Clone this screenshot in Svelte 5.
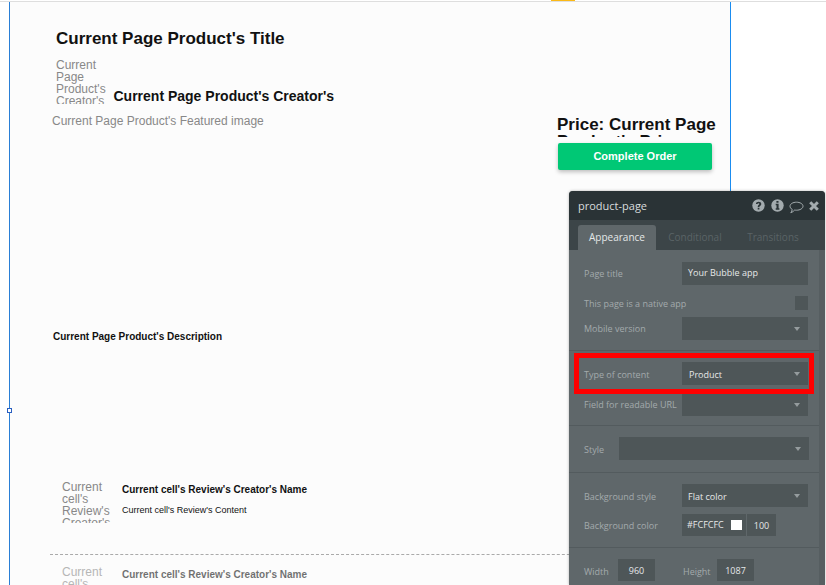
<script>
  const reviews = [
    { cls: 'review', content: true },
    { cls: 'review faded', content: false }
  ];
</script>

<div class="screen">
  <div class="topline"><span class="marker"></span></div>
  <main class="page">
    <span class="handle"></span>
    <h1>Current Page Product's Title</h1>
    <div class="creator">
      <div class="avatar">Current Page Product's Creator's</div>
      <div class="creator-name">Current Page Product's Creator's</div>
    </div>
    <div class="image-row">
      <div class="image-label">Current Page Product's Featured image</div>
      <div class="order">
        <div class="price">Price: Current Page Product's Price</div>
        <button class="complete">Complete Order</button>
      </div>
    </div>
    <div class="description">Current Page Product's Description</div>
    <div class="reviews">
      {#each reviews as r}
        <div class={r.cls}>
          <div class="r-avatar">Current cell's Review's Creator's</div>
          <div class="r-text">
            <div class="r-name">Current cell's Review's Creator's Name</div>
            {#if r.content}<div class="r-content">Current cell's Review's Content</div>{/if}
          </div>
        </div>
      {/each}
    </div>
  </main>

  <aside class="panel">
    <header class="head">
      <span class="title">product-page</span>
      <span class="icons">
        <svg width="13" height="13" viewBox="0 0 13 13"><circle cx="6.5" cy="6.5" r="6.2" fill="#a3abae"/><path d="M3.900 5c.1-1.500 1.200-2.200 2.700-2.200s2.700.8 2.700 2.100c0 1.700-1.900 1.700-1.900 3H5.700c0-2 1.600-2 1.600-2.900 0-.4-.3-.7-.8-.7-.6 0-.9.300-1 .8zM5.700 8.800h1.700v1.600H5.700z" fill="#2a3336"/></svg>
        <svg width="13" height="13" viewBox="0 0 13 13"><circle cx="6.5" cy="6.5" r="6.2" fill="#a3abae"/><path d="M5.400 2h2.100v1.800H5.400zM4.700 4.800h2.900v4.400h.8v1.500H4.700V9.200h.8V6.300h-.8z" fill="#2a3336"/></svg>
        <svg class="bubble" width="15" height="13" viewBox="0 0 15 13"><path d="M7.500 1.200c3.500 0 6.500 1.700 6.500 4s-3 4-6.500 4c-.6 0-1.200 0-1.800-.2-1 1-2.300 2.300-3.900 2.700.8-.9 1.300-2.100 1.400-3.300C1.900 7.700 1 6.500 1 5.200c0-2.300 3-4 6.500-4z" fill="none" stroke="#a3abae"/></svg>
        <svg width="10" height="10" viewBox="0 0 10 10"><path d="M1.200 1.200l7.600 7.600M8.800 1.200l-7.600 7.600" stroke="#a3abae" stroke-width="3"/></svg>
      </span>
    </header>
    <nav class="tabs">
      <span class="tab active">Appearance</span>
      <span class="tab">Conditional</span>
      <span class="tab">Transitions</span>
    </nav>
    <div class="body">
      <section class="sec first">
        <div class="row title-row"><label>Page title</label><div class="field text plain">Your Bubble app</div></div>
        <div class="row native-row"><label>This page is a native app</label><span class="check"></span></div>
        <div class="row mobile-row"><label>Mobile version</label><div class="field select"><i></i></div></div>
      </section>
      <section class="sec second">
        <div class="row type-row low"><label>Type of content</label><div class="field select text product">Product<i></i></div></div>
        <div class="row url-row"><label>Field for readable URL</label><div class="field select"><i></i></div></div>
      </section>
      <section class="sec third">
        <div class="row style-row low"><label>Style</label><div class="field select wide"><i></i></div></div>
      </section>
      <section class="sec fourth">
        <div class="row bg-row slight"><label>Background style</label><div class="field select text">Flat color<i></i></div></div>
        <div class="row color-row slight">
          <label>Background color</label>
          <div class="color-field">#FCFCFC<b></b></div>
          <div class="opacity">100</div>
        </div>
      </section>
      <section class="sec size low">
        <label class="w-label">Width</label><div class="num w-num">960</div>
        <label class="h-label">Height</label><div class="num">1087</div>
      </section>
    </div>
    <div class="redbox"></div>
  </aside>
</div>

<style>
  :global(body) { margin: 0; background: #fff; }
  .screen {
    position: relative;
    width: 826px;
    height: 585px;
    overflow: hidden;
    background: #fff;
    font-family: "Liberation Sans", Arial, sans-serif;
  }
  .topline { height: 2px; box-sizing: border-box; border-bottom: 1px solid #dedede; position: relative; }
  .marker { position: absolute; left: 551px; top: 0; width: 24px; height: 1px; background: #fbb917; }
  .page {
    position: relative;
    box-sizing: border-box;
    margin-left: 9px;
    width: 722px;
    height: 583px;
    background: #fcfcfc;
    border-left: 1px solid #2a7fd6;
    border-right: 1px solid #1a8cf0;
    padding-top: 27px;
  }
  .handle {
    position: absolute; left: -3px; top: 406px;
    background: #fff; border: 1px solid #2a5fc0;
    box-sizing: content-box; width: 3px; height: 3px;
  }
  h1 { margin: 0 0 0 46px; font-size: 17px; line-height: 20px; font-weight: bold; color: #111; }
  .creator { display: flex; margin: 10px 0 0 46px; align-items: flex-end; }
  .avatar { width: 50px; height: 45px; overflow: hidden; font-size: 12px; line-height: 12px; color: #888; }
  .creator-name { margin: 0 0 0 7.5px; font-size: 14px; line-height: 16px; font-weight: bold; color: #111; }
  .image-row { display: flex; justify-content: space-between; margin-top: 10px; height: 68px; }
  .image-label { margin-left: 42px; font-size: 12px; line-height: 14px; color: #888; }
  .order { width: 155px; margin-right: 17px; padding-top: 2px; }
  .price {
    font-size: 17px; line-height: 17px; font-weight: bold; color: #111; overflow: hidden;
    width: 165px; margin-left: -1px;
    height: 21px;
  }
  .complete {
    display: block; width: 154px; height: 27px; margin-top: 6px;
    border: 0; border-radius: 2px;
    background: #00c875; color: #fff;
    font: bold 11px/27px "Liberation Sans", Arial, sans-serif; letter-spacing: 0;
    box-shadow: 0 2px 4px rgba(0,0,0,.25);
    padding: 0;
  }
  .description { margin: 149px 0 0 43px; font-size: 10px; line-height: 12px; font-weight: bold; color: #111; }
  .reviews { margin: 138px 0 0 40px; }
  .review { display: flex; height: 74px; padding: 0 0 0 12px; border-bottom: 1px dashed #aaa; width: 560px; box-sizing: border-box; margin-bottom: 11px; }
  .r-avatar { width: 50px; height: 42px; overflow: hidden; font-size: 12px; line-height: 12px; color: #888; }
  .r-text { margin-left: 10px; padding-top: 3px; }
  .r-name { font-size: 10px; line-height: 12px; font-weight: bold; color: #111; }
  .r-content { margin-top: 8px; font-size: 9px; line-height: 12px; color: #111; }
  .faded { border: 0; opacity: .6; }

  .panel {
    position: absolute; left: 569px; top: 191px; width: 256px; height: 394px;
    border-radius: 4px 4px 0 0;
    background: #5f676a;
    overflow: hidden;
    font-family: "Open Sans", sans-serif;
    box-shadow: 0 0 3px rgba(0,0,0,.3);
  }
  .head { height: 29px; background: #2a3336; display: flex; align-items: center; justify-content: space-between; padding: 0 6px 0 9px; }
  .title { font-size: 11px; color: #d8dcdd; }
  .icons { display: flex; align-items: center; gap: 6px; }
  .bubble { margin: 4px -1px 0 -1px; }
  .tabs { height: 30px; background: #3c4548; display: flex; padding-left: 9px; box-sizing: border-box; align-items: flex-end; }
  .tab { width: 78px; height: 25px; line-height: 25px; text-align: center; font-size: 10px; color: #5a6366; border-radius: 3px 3px 0 0; }
  .active { background: #5f676a; color: #e4e7e8; }
  .body { border-right: 6px solid #565e61; height: 335px; box-sizing: border-box; }
  .sec { border-bottom: 1px solid #535b5e; padding: 0 11px 0 15px; box-sizing: border-box; }
  .first { height: 101px; padding-top: 11px; }
  .second { height: 75px; padding-top: 11px; }
  .third { height: 47px; padding-top: 11px; }
  .fourth { height: 75px; padding-top: 11px; }
  .row { display: flex; align-items: center; justify-content: space-between; }
  label { font-size: 9px; color: #a3aaac; }
  .low label { padding-top: 2px; }
  .slight label { padding-top: 1px; }
  .field { position: relative; width: 126px; height: 23px; background: #4e5658; box-sizing: border-box; padding-left: 6px; font-size: 9px; line-height: 25px; color: #e6e8e8; }
  .plain { line-height: 22px; }
  .product { padding-left: 7px; line-height: 26px; }
  .field i { position: absolute; right: 8px; top: 10px; width: 0; height: 0; border-style: solid; border-color: #959c9e transparent transparent; border-width: 4px 3.5px 0; }
  .title-row { height: 24px; }
  .native-row { height: 14px; margin-top: 11px; }
  .check { width: 13px; height: 14px; background: #4e5658; }
  .mobile-row { height: 22px; margin-top: 7px; }
  .type-row { height: 22px; }
  .url-row { height: 20px; margin-top: 10px; }
  .style-row { height: 23px; }
  .wide { width: 190px; margin-right: -1px; }
  .bg-row { height: 23px; }
  .color-row { height: 22px; margin-top: 7px; justify-content: flex-start; }
  .color-row label { width: 98px; }
  .color-field { position: relative; width: 64px; height: 22px; background: #4e5658; font-size: 9px; line-height: 21px; color: #e6e8e8; padding-left: 5px; box-sizing: border-box; }
  .color-field b { position: absolute; right: 4px; top: 6px; width: 11px; height: 10px; background: #fff; }
  .opacity { width: 29px; height: 22px; margin-left: 1px; background: #4e5658; font-size: 9px; line-height: 23px; text-align: center; color: #e6e8e8; }
  .size { display: flex; align-items: center; border: 0; padding-top: 11px; }
  .num { width: 37px; height: 22px; background: #4e5658; font-size: 9px; line-height: 24px; text-align: center; color: #e6e8e8; }
  .w-label { width: 34px; }
  .h-label { margin-left: 28px; width: 34px; }
  .redbox { position: absolute; left: 5px; top: 162px; width: 240px; height: 41px; box-sizing: border-box; border: 5px solid #f00; }
</style>
